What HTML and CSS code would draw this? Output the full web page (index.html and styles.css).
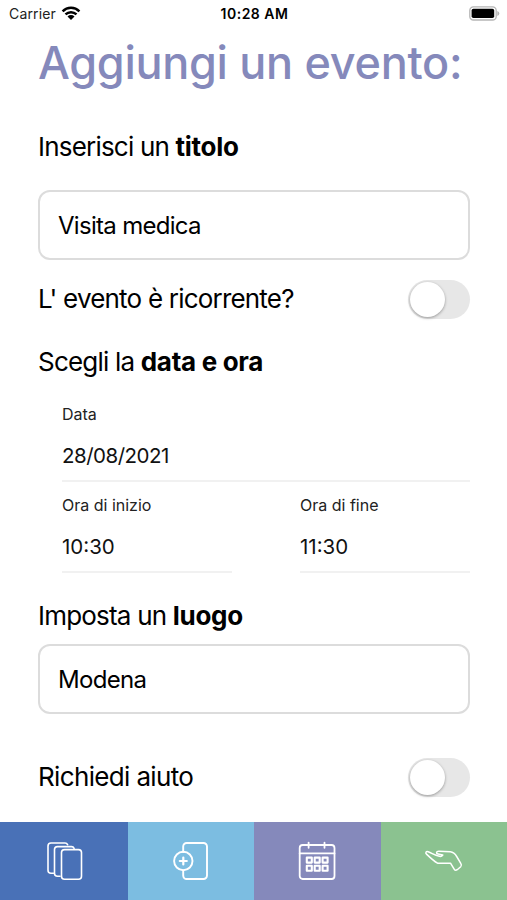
FILE: index.html
```html
<!DOCTYPE html>
<html lang="it">
<head>
  <meta charset="UTF-8">
  <meta name="viewport" content="width=device-width, initial-scale=1.0">
  <title>Aggiungi un evento</title>
  <link rel="stylesheet" href="styles.css">
</head>
<body>
  <div class="status-bar">
    <div class="carrier">
      <span>Carrier</span>
      <svg class="wifi" width="20" height="15" viewBox="0 0 20 15">
        <path d="M1.6 5.3a12 12 0 0 1 16.8 0M4.5 8.4a7.9 7.9 0 0 1 11 0" fill="none" stroke="#000" stroke-width="2.5"/>
        <path d="M6.5 10.4a5 5 0 0 1 7 0L10 14z"/>
      </svg>
    </div>
    <div class="clock">10:28 AM</div>
    <svg class="battery" width="31" height="15" viewBox="0 0 31 15">
      <rect x="0.8" y="0.8" width="26.4" height="13.2" rx="3.6" fill="#fff" stroke="#b5b5b5" stroke-width="1.3"/>
      <rect x="2.6" y="2.8" width="22.6" height="9.2" rx="1.8"/>
      <path d="M28.3 5v5q2-.8 2-2.5T28.3 5z" fill="#b5b5b5"/>
    </svg>
  </div>

  <main class="container">
    <h1>Aggiungi un evento:</h1>

    <label class="label label-titolo" for="titolo">Inserisci un <b>titolo</b></label>
    <input type="text" class="field" id="titolo" value="Visita medica">

    <div class="row row-ricorrente">
      <span class="label">L' evento è ricorrente?</span>
      <span class="switch"></span>
    </div>

    <div class="label label-data">Scegli la <b>data e ora</b></div>
    <div class="dates">
      <div class="date">
        <div class="caption">Data</div>
        <div class="value">28/08/2021</div>
      </div>
      <div class="hours">
        <div class="date">
          <div class="caption">Ora di inizio</div>
          <div class="value ora">10:30</div>
        </div>
        <div class="date">
          <div class="caption">Ora di fine</div>
          <div class="value ora">11:30</div>
        </div>
      </div>
    </div>

    <label class="label label-luogo" for="luogo">Imposta un <b>luogo</b></label>
    <input type="text" class="field" id="luogo" value="Modena">

    <div class="row row-aiuto">
      <span class="label">Richiedi aiuto</span>
      <span class="switch"></span>
    </div>
  </main>

  <nav class="tabs">
    <a class="tab tab-carte">
      <svg width="40" height="44" viewBox="0 0 40 44" stroke-width="1.6">
        <path d="M9.5 34.2H7a3 3 0 0 1-3-3V7a3 3 0 0 1 3-3h14a3 3 0 0 1 2.600 1.700"/>
        <path d="M16 37.200H13.500a3 3 0 0 1-3-3V10.600a3 3 0 0 1 3-3H27.500a3 3 0 0 1 2.600 1.700"/>
        <rect x="17.500" y="10.600" width="20" height="29.600" rx="3"/>
      </svg>
    </a>
    <a class="tab tab-aggiungi">
      <svg width="40" height="44" viewBox="0 0 40 44" stroke-width="1.9">
        <path d="M12.200 13V7.500A3.500 3.500 0 0 1 15.700 4H32.500A3.500 3.500 0 0 1 36 7.500v29a3.500 3.500 0 0 1-3.500 3.500H15.700a3.500 3.500 0 0 1-3.500-3.500V31.500"/>
        <circle cx="12.300" cy="22" r="9.200"/>
        <path d="M12.300 18.500v7M8.800 22h7" stroke-width="2.200"/>
      </svg>
    </a>
    <a class="tab tab-calendario">
      <svg width="40" height="44" viewBox="0 0 40 44" stroke-width="1.800">
        <rect x="2.700" y="6" width="34.800" height="34" rx="3"/>
        <path d="M2.700 14.400h34.800M11.600 3.600v5.200M27.500 3.600v5.200"/>
        <path d="M9.800 18.600h5v5h-5zM17.700 18.600h5v5h-5zM25.600 18.600h5v5h-5zM9.800 26.700h5v5h-5zM17.700 26.700h5v5h-5zM25.600 26.700h5v5h-5z" stroke-width="2.100"/>
      </svg>
    </a>
    <a class="tab tab-aiuto">
      <svg width="40" height="44" viewBox="0 0 40 44" stroke-width="1.500">
        <path d="M14.500 17C11.500 16.500 8 14.300 4.200 12.800c-2-.7-3.200.9-1.700 2.300C5.500 18 9 21.500 13.500 24.200H26.500l3.800 6.200c.8 1.300 1.900 1.100 2.900.3l3.500-3c1-.9.900-1.900.2-3l-4.200-7.200c-1.400-2.400-3.400-4.500-6.400-4.800L15 12.200c-3-.1-3.200 2.400-.9 2.900l4.700 1c-1 1.400-2.800 1.500-4.300.9z"/>
      </svg>
    </a>
  </nav>
</body>
</html>
```

FILE: styles.css
```css
* {
  box-sizing: border-box;
}
body {
  margin: 0;
  height: 900px;
  display: flex;
  flex-direction: column;
  overflow: hidden;
  background: #fff;
  color: #000;
  font-family: Inter, "Liberation Sans", sans-serif;
}
.status-bar {
  height: 27px;
  padding: 0 7px 0 9px;
  display: grid;
  grid-template-columns: 1fr auto 1fr;
  align-items: center;
  font-size: 14px;
}
.carrier {
  display: flex;
  align-items: center;
  gap: 5px;
  letter-spacing: 0.15px;
  color: #222;
}
.clock {
  font-weight: 600;
  letter-spacing: 0.5px;
}
.battery {
  justify-self: end;
}
.container {
  flex: 1;
  padding: 0 37px 0 38px;
}
h1 {
  margin: 0;
  height: 72px;
  line-height: 71px;
  font-size: 45px;
  font-weight: 500;
  letter-spacing: -0.3px;
  color: #8589bb;
  white-space: nowrap;
}
.label {
  display: block;
  font-size: 26px;
  line-height: 32px;
  letter-spacing: -0.8px;
  white-space: nowrap;
}
.label b {
  letter-spacing: -0.3px;
}
.label-titolo {
  margin-top: 32px;
}
.field {
  display: block;
  width: 100%;
  height: 70px;
  padding: 0 18px;
  border: 2px solid #dcdcdc;
  border-radius: 12px;
  background: #fff;
  font: inherit;
  font-size: 24px;
  letter-spacing: -0.7px;
}
.label-titolo + .field {
  margin-top: 27px;
}
.row {
  display: flex;
  align-items: center;
  justify-content: space-between;
  height: 40px;
}
.row-ricorrente {
  margin-top: 19px;
}
.switch {
  width: 62px;
  height: 39px;
  padding: 2px;
  border-radius: 20px;
  background: #e7e7e7;
}
.switch::before {
  content: "";
  display: block;
  width: 35px;
  height: 35px;
  border-radius: 50%;
  background: #fff;
  box-shadow: 0 1px 3px rgba(0, 0, 0, 0.35);
}
.label-data {
  margin-top: 27px;
}
.dates {
  margin-top: 21px;
  padding-left: 24px;
}
.date {
  height: 83px;
  border-bottom: 2px solid #f1f1f1;
}
.caption {
  font-size: 16px;
  line-height: 30px;
  color: #222;
}
.value {
  margin-top: 12px;
  font-size: 20.500px;
  line-height: 30px;
  letter-spacing: -0.5px;
  color: #111;
}
.ora {
  letter-spacing: 0;
}
.hours {
  margin-top: 8px;
  display: grid;
  grid-template-columns: 170px 170px;
  justify-content: space-between;
}
.label-luogo {
  margin-top: 27px;
}
.label-luogo + .field {
  margin-top: 12px;
}
.row-aiuto {
  margin-top: 43px;
}
.row-aiuto .label {
  letter-spacing: -0.65px;
}
.tabs {
  height: 78px;
  display: grid;
  grid-template-columns: 127.500px 126.500px 126.500px 1fr;
}
.tab {
  display: flex;
  align-items: center;
  justify-content: center;
}
.tab svg {
  fill: none;
  stroke: #fff;
  stroke-linecap: round;
  stroke-linejoin: round;
}
.tab-carte {
  background: #4971b7;
}
.tab-aggiungi {
  background: #7cbde1;
}
.tab-calendario {
  background: #8589bb;
}
.tab-aiuto {
  background: #8bc290;
}
```
